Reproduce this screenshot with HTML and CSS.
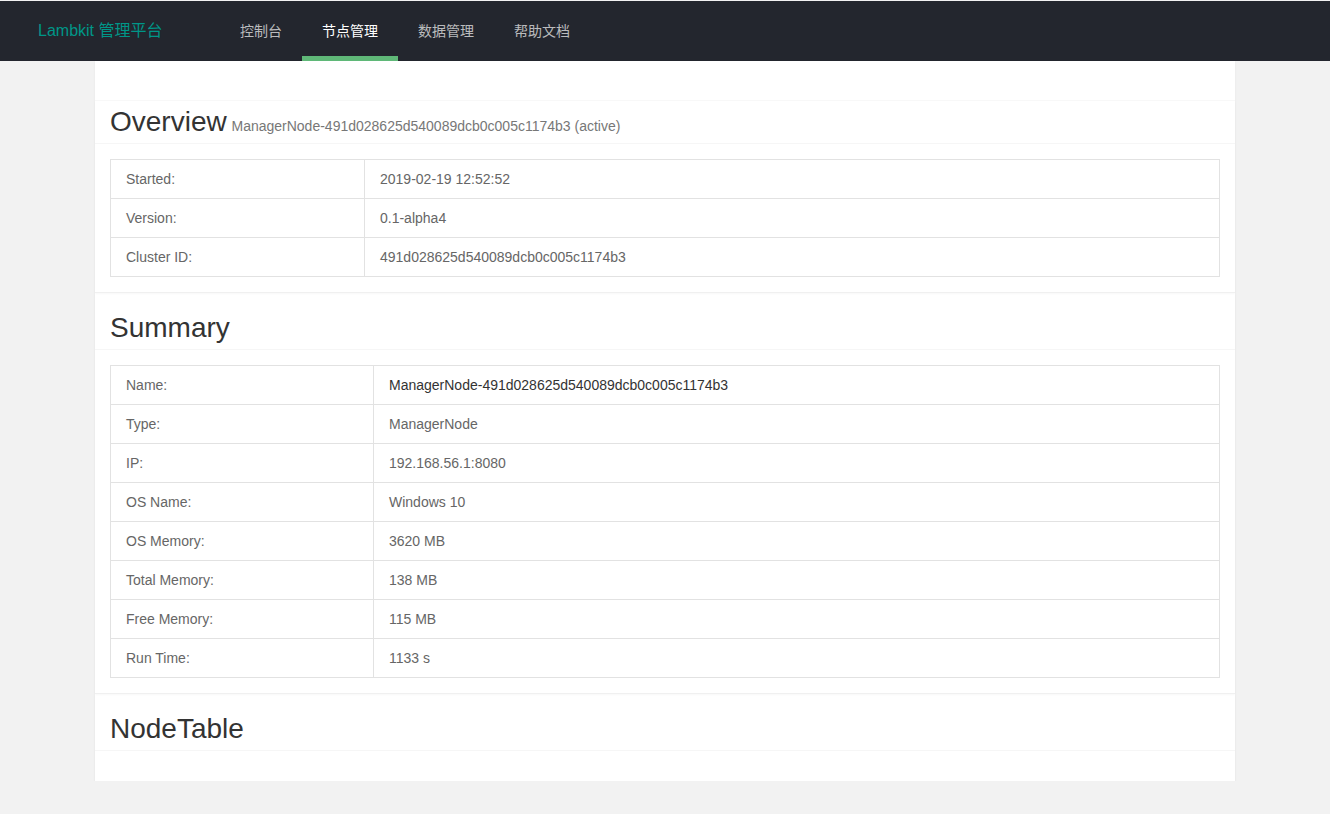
FILE: index.html
```html
<!DOCTYPE html>
<html lang="zh-CN">
<head>
<meta charset="utf-8">
<title>Lambkit 管理平台</title>
<link rel="stylesheet" href="styles.css">
</head>
<body>
<header class="header">
  <div class="brand">Lambkit 管理平台</div>
  <nav class="nav">
    <a class="nav-item">控制台</a>
    <a class="nav-item active">节点管理</a>
    <a class="nav-item">数据管理</a>
    <a class="nav-item">帮助文档</a>
  </nav>
</header>
<main class="page">
  <div class="topbar"></div>
  <section class="card card-first">
    <div class="card-header"><h2 class="title">Overview <small class="sub">ManagerNode-491d028625d540089dcb0c005c1174b3 (active)</small></h2></div>
    <div class="card-body">
      <table class="kv kv-overview">
        <tr><td class="k">Started:</td><td>2019-02-19 12:52:52</td></tr>
        <tr><td class="k">Version:</td><td>0.1-alpha4</td></tr>
        <tr><td class="k">Cluster ID:</td><td>491d028625d540089dcb0c005c1174b3</td></tr>
      </table>
    </div>
  </section>
  <section class="card">
    <div class="card-header"><h2 class="title">Summary</h2></div>
    <div class="card-body">
      <table class="kv kv-summary">
        <tr><td class="k">Name:</td><td class="strong">ManagerNode-491d028625d540089dcb0c005c1174b3</td></tr>
        <tr><td class="k">Type:</td><td>ManagerNode</td></tr>
        <tr><td class="k">IP:</td><td>192.168.56.1:8080</td></tr>
        <tr><td class="k">OS Name:</td><td>Windows 10</td></tr>
        <tr><td class="k">OS Memory:</td><td>3620 MB</td></tr>
        <tr><td class="k">Total Memory:</td><td>138 MB</td></tr>
        <tr><td class="k">Free Memory:</td><td>115 MB</td></tr>
        <tr><td class="k">Run Time:</td><td>1133 s</td></tr>
      </table>
    </div>
  </section>
  <section class="card card-last">
    <div class="card-header"><h2 class="title">NodeTable</h2></div>
    <div class="card-body empty"></div>
  </section>
</main>
</body>
</html>
```
FILE: styles.css
```css
* { box-sizing: border-box; }
html, body { margin: 0; padding: 0; }
body {
  background: #f2f2f2;
  font-family: "Liberation Sans", Arial, "Noto Sans CJK SC", sans-serif;
  font-size: 14px;
  color: #666;
  padding-top: 1px;
}
.header {
  height: 60px;
  background: #23262e;
  display: flex;
  align-items: center;
}
.brand {
  width: 220px;
  padding-left: 38px;
  color: #009688;
  font-size: 16px;
  line-height: 60px;
}
.nav { display: flex; height: 60px; }
.nav-item {
  position: relative;
  display: block;
  padding: 0 20px;
  line-height: 60px;
  color: rgba(255,255,255,0.7);
  font-size: 14px;
  cursor: pointer;
}
.nav-item.active { color: #fff; }
.nav-item.active::after {
  content: "";
  position: absolute;
  left: 0; right: 0; bottom: 0;
  height: 5px;
  background: #5fb878;
}
.page {
  width: 1140px;
  margin: 0 auto;
  background: #fff;
  box-shadow: 0 1px 2px 0 rgba(0,0,0,0.06);
}
.topbar {
  height: 40px;
  border-bottom: 1px solid #f8f8f8;
}
.card {
  border-bottom: 1px solid #f0f0f0;
  box-shadow: 0 1px 2px 0 rgba(0,0,0,0.03);
}
.card-last { border-bottom: none; }
.card-header {
  padding: 20px 15px 6px;
  border-bottom: 1px solid #f6f6f6;
}
.card-first .card-header { padding-top: 6px; }
.title {
  margin: 0;
  height: 30px;
  font-size: 28px;
  line-height: 30px;
  font-weight: 400;
  color: #333;
}
.sub {
  font-size: 14px;
  line-height: 1;
  color: #777;
  margin-left: -3px;
}
.card-body { padding: 15px; }
.card-body.empty { height: 30px; padding: 0; }
.kv {
  width: 100%;
  border-collapse: collapse;
  border: 1px solid #e2e2e2;
}
.kv td {
  border: 1px solid #e2e2e2;
  padding: 9px 15px;
  line-height: 20px;
  color: #666;
}
.kv-overview .k { width: 254px; }
.kv-summary .k { width: 263px; }
.kv td.strong { color: #333; }
```
